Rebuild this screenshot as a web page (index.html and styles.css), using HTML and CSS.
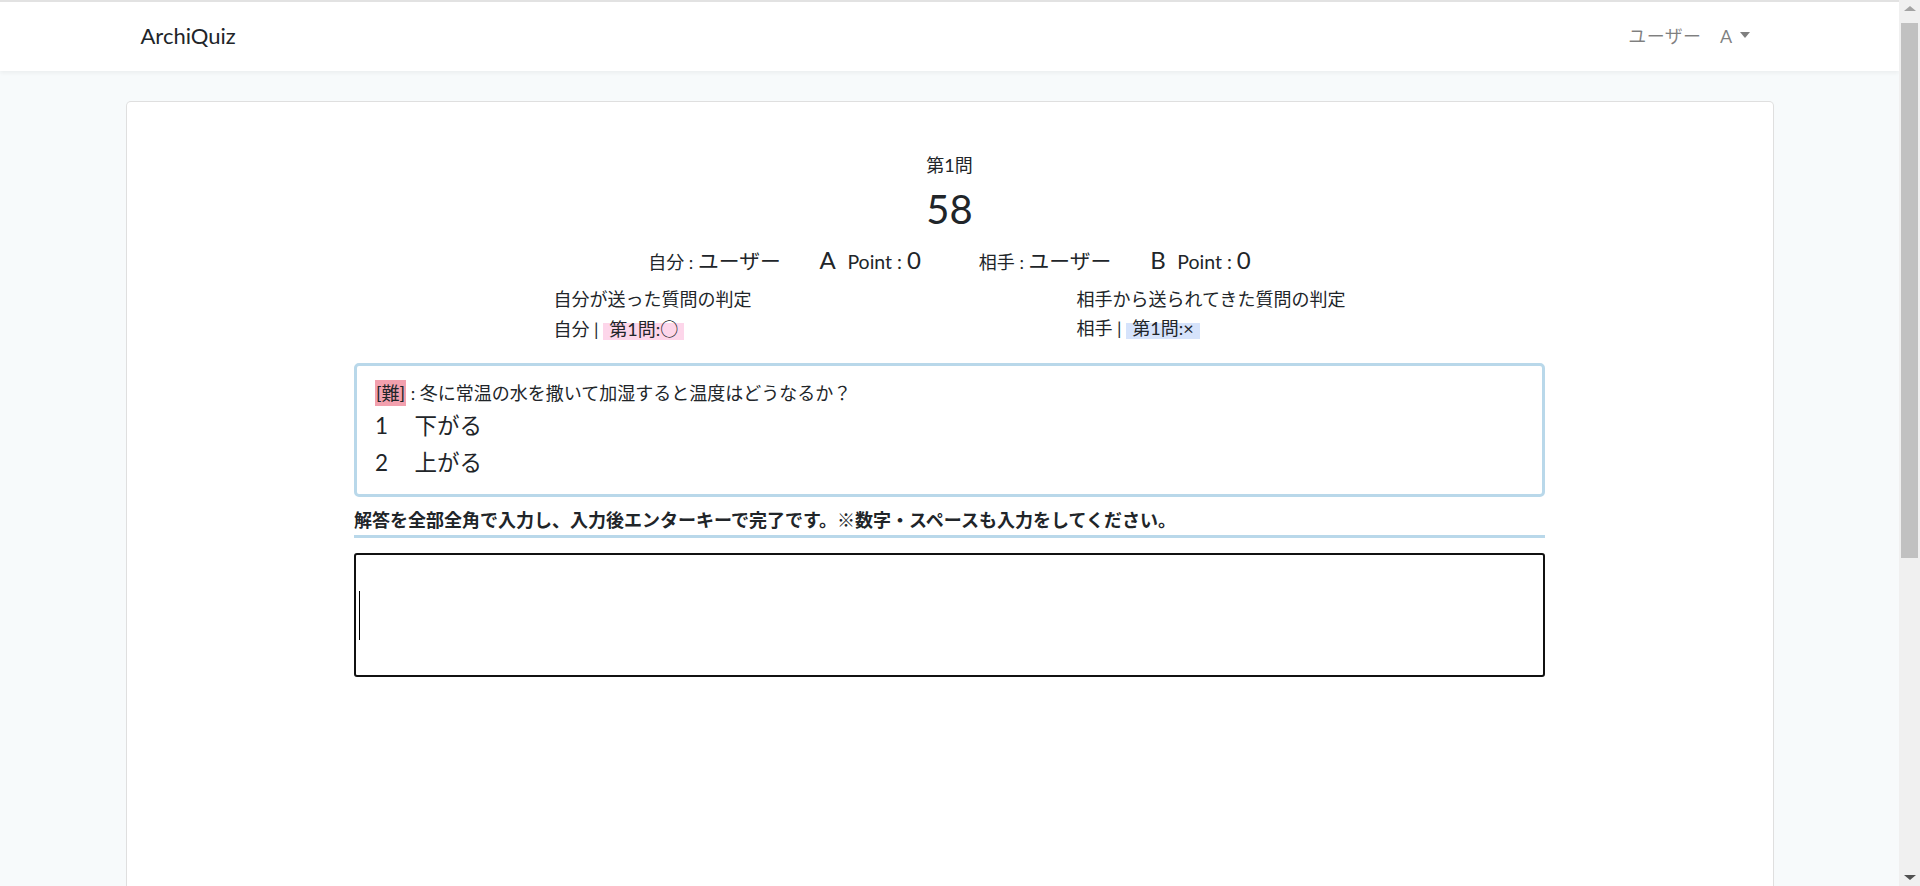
FILE: index.html
```html
<!DOCTYPE html>
<html lang="ja">
<head>
<meta charset="utf-8">
<title>ArchiQuiz</title>
<link rel="stylesheet" href="styles.css">
</head>
<body>
<header class="navbar">
  <div class="nav-inner">
    <a class="brand" href="#">ArchiQuiz</a>
    <div class="user">ユーザー　A<span class="dropdown-caret"></span></div>
  </div>
</header>
<main class="main">
  <div class="card">
    <div class="card-body">
      <div class="qno">第1問</div>
      <h1 class="timer">58</h1>
      <div class="scores">
        <div class="score">自分 : <span class="big">ユーザー　<span class="initial">A</span></span> <span class="pt">Point : </span><span class="num">0</span></div>
        <div class="score">相手 : <span class="big">ユーザー　<span class="initial">B</span></span> <span class="pt">Point : </span><span class="num">0</span></div>
      </div>
      <div class="judges">
        <div class="judge">
          <div>自分が送った質問の判定</div>
          <div>自分 | <span class="mark mark-pink">第1問:<span class="cjk">○</span></span></div>
        </div>
        <div class="judge">
          <div>相手から送られてきた質問の判定</div>
          <div>相手 | <span class="mark mark-blue">第1問:×</span></div>
        </div>
      </div>
      <div class="qbox">
        <div class="qtext"><span class="level">[難]</span> : 冬に常温の水を撒いて加湿すると温度はどうなるか？</div>
        <div class="choice"><span class="cnum">1</span>　下がる</div>
        <div class="choice"><span class="cnum">2</span>　上がる</div>
      </div>
      <p class="instruction">解答を全部全角で入力し、入力後エンターキーで完了です。※数字・スペースも入力をしてください。</p>
      <div class="answer">
        <textarea class="answer-input"></textarea>
        <span class="text-caret"></span>
      </div>
    </div>
  </div>
</main>
<div class="scrollbar" aria-hidden="true">
  <span class="sb-btn sb-up"></span>
  <span class="sb-track"><span class="sb-thumb"></span></span>
  <span class="sb-btn sb-down"></span>
</div>
</body>
</html>
```
FILE: styles.css
```css
html, body {
  margin: 0;
  padding: 0;
}
body {
  background: #f7fafb;
  color: #212529;
  font-family: Lato, "Noto Sans CJK JP", sans-serif;
  font-size: 18px;
  line-height: 1.6;
  border-top: 2px solid #e2e2e2;
  margin-right: 21px;
}
.navbar {
  background: #fff;
  box-shadow: 0 2px 4px rgba(0, 0, 0, 0.05);
  height: 69px;
}
.nav-inner {
  max-width: 1648px;
  margin: 0 auto;
  height: 100%;
  display: flex;
  align-items: center;
  justify-content: space-between;
  padding: 0 24px 0 15px;
  box-sizing: border-box;
}
.brand {
  font-size: 22px;
  color: #212529;
  text-decoration: none;
  margin-top: -2px;
}
.user {
  font-size: 18px;
  letter-spacing: 0.4px;
  color: rgba(0, 0, 0, 0.5);
  display: flex;
  align-items: center;
}
.dropdown-caret {
  display: inline-block;
  margin-left: 7px;
  border-top: 6px solid rgba(0, 0, 0, 0.5);
  border-left: 5.5px solid transparent;
  border-right: 5.5px solid transparent;
  margin-top: -2px;
}
.main {
  padding: 30px 0;
}
.card {
  max-width: 1648px;
  margin: 0 auto;
  box-sizing: border-box;
  background: #fff;
  border: 1px solid rgba(0, 0, 0, 0.125);
  border-radius: 5px;
  min-height: 1270px;
}
.card-body {
  padding: 49px 22px 40px;
}
.qno {
  text-align: center;
  line-height: 28.8px;
}
.timer {
  text-align: center;
  font-size: 40px;
  font-weight: 400;
  line-height: 48px;
  margin: 5px 0 0;
}
.scores {
  display: flex;
  justify-content: center;
  gap: 58px;
  margin-top: 9px;
  line-height: 35px;
}
.big {
  font-size: 20.8px;
}
.initial {
  margin-left: 18px;
  font-size: 24px;
}
.pt {
  margin-left: 7px;
  font-size: 19.5px;
}
.num {
  font-size: 24px;
}
.judges {
  width: 1046px;
  margin-left: calc(50% - 396px);
  margin-top: 5px;
  display: grid;
  grid-template-columns: 1fr 1fr;
  line-height: 28.8px;
}
.mark {
  padding: 0 6px;
}
.cjk {
  font-family: "Noto Sans CJK JP", sans-serif;
}
.mark-pink {
  background: linear-gradient(transparent 25%, #fdd6ea 25%);
}
.mark-blue {
  background: linear-gradient(transparent 25%, #d6e3fb 25%);
}
.qbox {
  max-width: 1191px;
  margin: 20px auto 0;
  box-sizing: border-box;
  border: 3px solid #b9d8ea;
  border-radius: 5px;
  padding: 13px 18px 12px;
}
.qtext {
  line-height: 28.8px;
}
.level {
  background: #f2a0ae;
  padding: 2px 1px;
}
.choice {
  font-size: 22.5px;
  line-height: 36.8px;
}
.cnum {
  display: inline-block;
  width: 17px;
}
.instruction {
  max-width: 1191px;
  margin: 9px auto 0;
  font-weight: 700;
  line-height: 28.8px;
  border-bottom: 3px solid #b9d8ea;
}
.answer {
  max-width: 1191px;
  margin: 15px auto 0;
  position: relative;
}
.answer-input {
  display: block;
  width: 100%;
  height: 124px;
  box-sizing: border-box;
  border: 2px solid #111;
  border-radius: 3px;
  resize: none;
  padding: 2px;
  font-family: inherit;
  outline: none;
}
.text-caret {
  position: absolute;
  left: 5px;
  top: 38px;
  width: 1px;
  height: 49px;
  background: #000;
}
.scrollbar {
  position: fixed;
  top: 0;
  right: 0;
  bottom: 0;
  width: 21px;
  background: #f0f0f0;
  display: flex;
  flex-direction: column;
  align-items: center;
}
.sb-btn {
  height: 17px;
  width: 100%;
  display: flex;
  align-items: center;
  justify-content: center;
}
.sb-up::before {
  content: "";
  border-bottom: 5px solid #a3a3a3;
  border-left: 6px solid transparent;
  border-right: 6px solid transparent;
}
.sb-down::before {
  content: "";
  border-top: 5px solid #505050;
  border-left: 6px solid transparent;
  border-right: 6px solid transparent;
}
.sb-track {
  flex: 1;
  width: 100%;
  padding: 6px 2px 0;
  box-sizing: border-box;
}
.sb-thumb {
  display: block;
  height: 535px;
  background: #c1c1c1;
}
```
